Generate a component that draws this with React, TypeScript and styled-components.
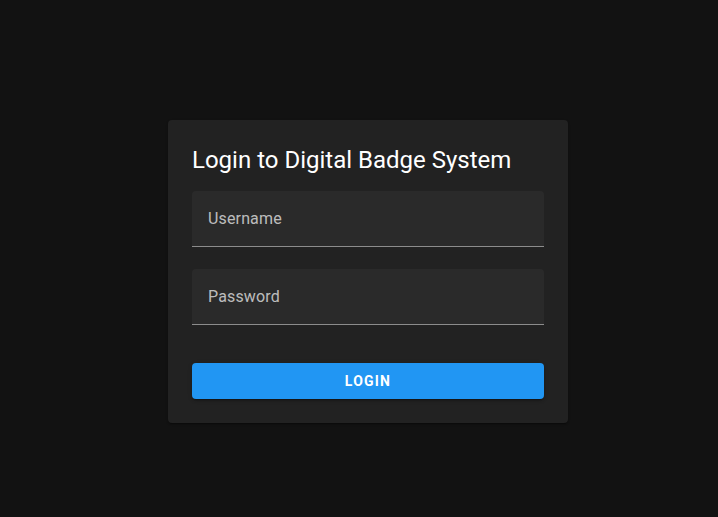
import React from "react";
import styled, { createGlobalStyle } from "styled-components";

const Global = createGlobalStyle`
  html, body { margin: 0; padding: 0; background: #121212; }
  body { font-family: Roboto, "Helvetica", Arial, sans-serif; }
  * { box-sizing: border-box; }
`;

const Page = styled.div`
  width: 718px;
  height: 517px;
  display: flex;
  justify-content: center;
  align-items: flex-start;
  padding: 120px 0 0 18px;
  background: #121212;
`;

const Card = styled.form`
  width: 400px;
  background: #222222;
  border-radius: 4px;
  padding: 24px;
  display: flex;
  flex-direction: column;
  box-shadow: 0 2px 1px -1px rgba(0,0,0,0.2), 0 1px 1px 0 rgba(0,0,0,0.14), 0 1px 3px 0 rgba(0,0,0,0.12);
`;

const Title = styled.h1`
  margin: 0 0 15px;
  font-size: 24px;
  line-height: 32px;
  font-weight: 400;
  color: #ffffff;
`;

const Field = styled.label<{ $gap: number }>`
  display: flex;
  align-items: center;
  height: 56px;
  margin-bottom: ${(p) => p.$gap}px;
  padding: 0 16px;
  background: #2a2a2a;
  border-radius: 4px 4px 0 0;
  border-bottom: 1px solid #8c8c8c;
  font-size: 16px;
  letter-spacing: 0.15px;
  color: rgba(255, 255, 255, 0.7);
`;

const Input = styled.input`
  display: none;
`;

const Button = styled.button`
  height: 36px;
  width: 100%;
  border: none;
  border-radius: 4px;
  background: #2196f3;
  color: #ffffff;
  font-family: Roboto, Arial, sans-serif;
  font-size: 14px;
  font-weight: 700;
  letter-spacing: 1.2px;
  text-transform: uppercase;
  box-shadow: 0 3px 1px -2px rgba(0,0,0,0.2), 0 2px 2px 0 rgba(0,0,0,0.14), 0 1px 5px 0 rgba(0,0,0,0.12);
  cursor: pointer;
`;

export default function App() {
  return (
    <>
      <Global />
      <Page>
        <Card onSubmit={(e) => e.preventDefault()}>
          <Title>Login to Digital Badge System</Title>
          <Field $gap={22}>
            Username
            <Input type="text" />
          </Field>
          <Field $gap={38}>
            Password
            <Input type="password" />
          </Field>
          <Button type="submit">Login</Button>
        </Card>
      </Page>
    </>
  );
}
